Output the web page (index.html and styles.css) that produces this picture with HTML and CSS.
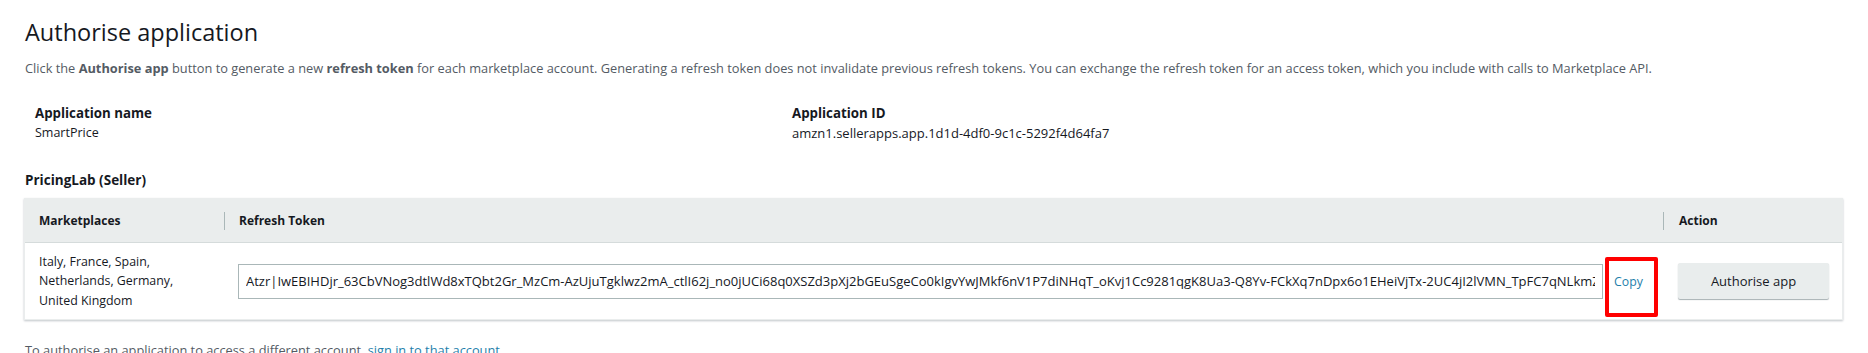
FILE: index.html
```html
<!DOCTYPE html>
<html lang="en">
<head>
<meta charset="utf-8">
<title>Authorise application</title>
<link rel="stylesheet" href="styles.css">
</head>
<body>
<main class="page">
  <h1 class="title">Authorise application</h1>
  <p class="intro">Click the <b>Authorise app</b> button to generate a new <b>refresh token</b> for each marketplace account. Generating a refresh token does not invalidate previous refresh tokens. You can exchange the refresh token for an access token, which you include with calls to Marketplace API.</p>

  <section class="details">
    <div class="field">
      <div class="label">Application name</div>
      <div class="value">SmartPrice</div>
    </div>
    <div class="field">
      <div class="label">Application ID</div>
      <div class="value value-id">amzn1.sellerapps.app.1d1d-4df0-9c1c-5292f4d64fa7</div>
    </div>
  </section>

  <h2 class="account">PricingLab (Seller)</h2>

  <div class="table">
    <div class="th th-first">Marketplaces</div>
    <div class="th th-div th-token">Refresh Token</div>
    <div class="th th-div th-action">Action</div>

    <div class="td td-markets">Italy, France, Spain,<br>Netherlands, Germany,<br>United Kingdom</div>
    <div class="td td-token">
      <input class="token-input" type="text" readonly value="Atzr|IwEBIHDjr_63CbVNog3dtlWd8xTQbt2Gr_MzCm-AzUjuTgklwz2mA_ctlI62j_no0jUCi68q0XSZd3pXj2bGEuSgeCo0kIgvYwJMkf6nV1P7diNHqT_oKvj1Cc9281qgK8Ua3-Q8Yv-FCkXq7nDpx6o1EHeiVjTx-2UC4jI2lVMN_TpFC7qNLkmZ8wRk3dS">
      <span class="copy-wrap"><a class="copy" href="#">Copy</a><span class="highlight"></span></span>
    </div>
    <div class="td td-action">
      <button class="btn" type="button">Authorise app</button>
    </div>
  </div>

  <p class="footnote">To authorise an application to access a different account, <a class="link" href="#">sign in to that account</a>.</p>
</main>
</body>
</html>
```

FILE: styles.css
```css
* { box-sizing: border-box; }

html, body {
  margin: 0;
  padding: 0;
  background: #ffffff;
}

body {
  font-family: "Open Sans", "Noto Sans", "Liberation Sans", sans-serif;
  font-size: 13px;
  color: #16191f;
}

.page {
  padding: 0 25px 0 24px;
}

.title {
  margin: 16px 0 0 1px;
  font-size: 23.5px;
  line-height: 32px;
  font-weight: 400;
  color: #16191f;
}

.intro {
  margin: 10px 0 0 1px;
  font-size: 12.8px;
  line-height: 20px;
  color: #545b64;
}

.intro b { color: #545b64; font-weight: 700; }

.details {
  display: grid;
  grid-template-columns: 757px 1fr;
  padding-left: 11px;
  margin-top: 25px;
}

.label {
  font-weight: 700;
  font-size: 13.3px;
  line-height: 20px;
}

.value {
  font-size: 12.5px;
  line-height: 20px;
  color: #16191f;
}

.value-id { font-size: 13px; }

.account {
  margin: 27px 0 0 1px;
  font-size: 13.5px;
  line-height: 20px;
  font-weight: 700;
}

.table {
  margin-top: 8px;
  display: grid;
  grid-template-columns: 199px 1fr 179px;
  border: 1px solid #eaeded;
  box-shadow: 0 1px 2px rgba(0, 22, 40, 0.25);
  background: #fff;
}

.th {
  position: relative;
  height: 44px;
  display: flex;
  align-items: center;
  background: #eaeded;
  border-bottom: 1px solid #d5dbdb;
  font-weight: 700;
  font-size: 12px;
}

.th-first { padding-left: 14px; }
.th-token { padding-left: 15px; }
.th-action { padding-left: 16px; }

.th-div::before {
  content: "";
  position: absolute;
  left: 0;
  top: 13px;
  height: 18px;
  border-left: 1px solid #aab7b8;
}

.td {
  height: 76px;
  display: flex;
  align-items: center;
}

.td-markets {
  padding-left: 14px;
  font-size: 12.4px;
  line-height: 19.5px;
  color: #16191f;
}

.td-token {
  padding-left: 14px;
}

.token-input {
  flex: 1;
  min-width: 0;
  height: 35px;
  border: 1px solid #aab7b8;
  border-radius: 0;
  padding: 0 7px;
  font-family: inherit;
  font-size: 13px;
  color: #16191f;
  background: #fff;
  outline: none;
}

.copy-wrap {
  position: relative;
  width: 60px;
  flex: none;
  padding-left: 11px;
}

.copy {
  color: #1f7fab;
  text-decoration: none;
  font-size: 12.3px;
}

.highlight {
  position: absolute;
  left: 2px;
  top: -15px;
  width: 53px;
  height: 60px;
  border: 4px solid #ff0000;
  border-radius: 2px;
}

.td-action {
  padding-left: 15px;
}

.btn {
  width: 151px;
  height: 36px;
  border: none;
  border-radius: 2px;
  background: #e9eded;
  box-shadow: 0 1px 1px rgba(0, 28, 36, 0.35);
  font-family: inherit;
  font-size: 13px;
  color: #16191f;
  padding: 0;
}

.footnote {
  margin: 20px 0 0 1px;
  font-size: 12.8px;
  line-height: 20px;
  color: #545b64;
}

.link {
  color: #1f7fab;
  text-decoration: none;
}
```
